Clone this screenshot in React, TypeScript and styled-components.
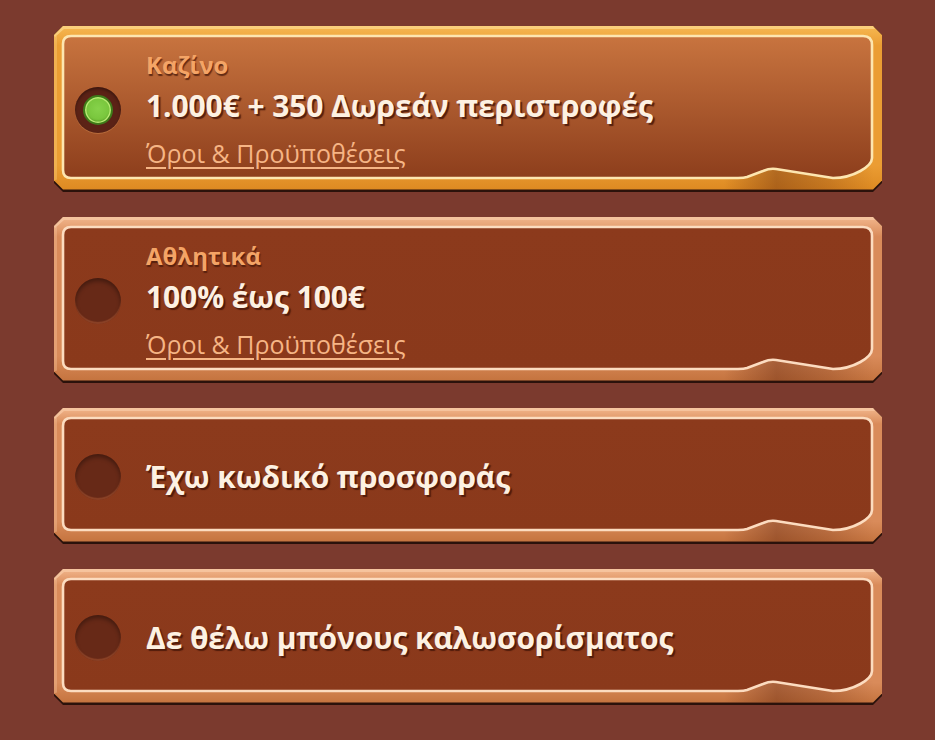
import React, { useId } from "react";
import styled, { createGlobalStyle } from "styled-components";

const Global = createGlobalStyle`
  html, body { margin: 0; padding: 0; background: #7b3a2e; }
  body { font-family: "Open Sans", "Noto Sans", "DejaVu Sans", sans-serif; }
  * { box-sizing: border-box; }
`;

const W = 828;

const List = styled.div`
  width: ${W}px;
  margin: 26px 0 0 54px;
  display: flex;
  flex-direction: column;
  gap: 25px;
`;

const Card = styled.div<{ $h: number }>`
  position: relative;
  height: ${(p) => p.$h}px;
  display: flex;
  align-items: center;
  gap: 25px;
  padding: 16px 40px 14px 21px;
  cursor: pointer;
`;

const Art = styled.svg`
  position: absolute;
  inset: 0;
  z-index: 0;
`;

const Radio = styled.div<{ $on: boolean }>`
  position: relative;
  z-index: 1;
  flex: none;
  width: 46px;
  height: 46px;
  border-radius: 50%;
  display: flex;
  align-items: center;
  justify-content: center;
  background: ${(p) => (p.$on ? "#5b2216" : "#672917")};
  box-shadow: ${(p) =>
    p.$on
      ? "inset 0 2px 3px rgba(0,0,0,0.35), 0 1px 0 rgba(255,190,120,0.25)"
      : "inset 0 3px 4px rgba(0,0,0,0.35), inset 0 -2px 1px rgba(190,100,60,0.45)"};
`;

const Dot = styled.div`
  width: 30px;
  height: 30px;
  border-radius: 50%;
  background: radial-gradient(circle at 50% 45%, #86d24a 0%, #78c53c 60%, #6cb432 100%);
  border: 2px solid #3f7a1a;
  box-shadow: inset 0 0 0 1.5px #b6ea72, inset 0 -2px 2px rgba(40,90,10,0.4);
`;

const Texts = styled.div`
  position: relative;
  z-index: 1;
  display: flex;
  flex-direction: column;
  align-items: flex-start;
`;

const Label = styled.div`
  font-size: 24px;
  font-weight: 700;
  line-height: 32px;
  color: #f4a466;
  text-shadow: 1px 2px 1px rgba(70, 24, 10, 0.75);
  margin-bottom: 3px;
`;

const Title = styled.div`
  font-size: 30px;
  font-weight: 700;
  line-height: 44px;
  color: #fdf1e2;
  letter-spacing: -0.1px;
  text-shadow: 2px 2px 1px rgba(70, 22, 8, 0.85);
`;

const Terms = styled.a`
  font-size: 25px;
  font-weight: 400;
  line-height: 36px;
  margin-top: 7px;
  color: #f6b585;
  text-decoration: underline;
  text-decoration-thickness: 1.5px;
  text-underline-offset: 4px;
`;

type Pal = {
  frameTop: string;
  frameMid: string;
  frameBot: string;
  fillTop: string;
  fillBot: string;
  line: string;
  hi: string;
};

const gold: Pal = {
  frameTop: "#f6b852",
  frameMid: "#eb9d33",
  frameBot: "#de8a22",
  fillTop: "#c8743f",
  fillBot: "#8d3e1c",
  line: "#fde6b0",
  hi: "#fbd486",
};

const copper: Pal = {
  frameTop: "#f2b68c",
  frameMid: "#d98b5a",
  frameBot: "#c5743f",
  fillTop: "#8c3a1c",
  fillBot: "#8a391b",
  line: "#fcdcc0",
  hi: "#f8c8a4",
};

function Frame({ h, pal }: { h: number; pal: Pal }) {
  const id = useId().replace(/:/g, "");
  const b = h - 14;
  const c = 9;
  const hb = h - 2.5;
  const outer = (hh: number) =>
    `M${c},0 L${W - c},0 L${W},${c} L${W},${hh - c} L${W - c},${hh} L${c},${hh} L0,${hh - c} L0,${c} Z`;
  const inner =
    `M17,10 L809,10 Q818,10 818,19 L818,${b - 20} ` +
    `C818,${b - 12} 800,${b} 779,${b} ` +
    `L722,${b - 9} Q716,${b - 10} 709,${b - 7} L693,${b - 1} Q690,${b} 684,${b} ` +
    `L17,${b} Q9,${b} 9,${b - 8} L9,18 Q9,10 17,10 Z`;
  return (
    <Art width={W} height={h} viewBox={`0 0 ${W} ${h}`} aria-hidden>
      <defs>
        <linearGradient id={`f${id}`} x1="0" y1="0" x2="0" y2="1">
          <stop offset="0" stopColor={pal.frameTop} />
          <stop offset="0.12" stopColor={pal.frameMid} />
          <stop offset="0.85" stopColor={pal.frameMid} />
          <stop offset="1" stopColor={pal.frameBot} />
        </linearGradient>
        <linearGradient id={`i${id}`} x1="0" y1="0" x2="0" y2="1">
          <stop offset="0" stopColor={pal.fillTop} />
          <stop offset="1" stopColor={pal.fillBot} />
        </linearGradient>
        <linearGradient id={`s${id}`} x1="0" y1="0" x2="1" y2="0">
          <stop offset="0" stopColor="#5a1e0a" stopOpacity="0" />
          <stop offset="0.35" stopColor="#5a1e0a" stopOpacity="0.38" />
          <stop offset="0.7" stopColor="#5a1e0a" stopOpacity="0.2" />
          <stop offset="1" stopColor="#5a1e0a" stopOpacity="0" />
        </linearGradient>
      </defs>
      <path d={outer(h)} fill="#2b120b" />
      <path d={outer(hb)} fill={`url(#f${id})`} />
      <path d={`M${c},0 L${W - c},0 L${W - c + 2},3 L${c + 1},3 L1,${c + 2} L0,${c} Z`} fill={pal.hi} opacity="0.8" />
      <path d={`M0,${c} L3,${c + 1} L3,${hb - c - 1} L0,${hb - c} Z`} fill={pal.hi} opacity="0.35" />
      <rect x="670" y={b - 10} width="150" height={hb - b + 10} fill={`url(#s${id})`} />
      <path d={inner} fill={`url(#i${id})`} />
      <path d={inner} fill="none" stroke={pal.line} strokeWidth="2.6" strokeLinejoin="round" />
    </Art>
  );
}

type Item = { id: string; label?: string; title: string; terms?: boolean };

const items: Item[] = [
  { id: "casino", label: "Καζίνο", title: "1.000€ + 350 Δωρεάν περιστροφές", terms: true },
  { id: "sports", label: "Αθλητικά", title: "100% έως 100€", terms: true },
  { id: "code", title: "Έχω κωδικό προσφοράς" },
  { id: "none", title: "Δε θέλω μπόνους καλωσορίσματος" },
];

export default function App() {
  const [sel, setSel] = React.useState("casino");
  return (
    <>
      <Global />
      <List>
        {items.map((it) => {
          const on = sel === it.id;
          const h = it.terms ? 166 : 136;
          return (
            <Card key={it.id} $h={h} onClick={() => setSel(it.id)}>
              <Frame h={h} pal={on ? gold : copper} />
              <Radio $on={on}>{on && <Dot />}</Radio>
              <Texts>
                {it.label && <Label>{it.label}</Label>}
                <Title>{it.title}</Title>
                {it.terms && <Terms href="#">Όροι &amp; Προϋποθέσεις</Terms>}
              </Texts>
            </Card>
          );
        })}
      </List>
    </>
  );
}
